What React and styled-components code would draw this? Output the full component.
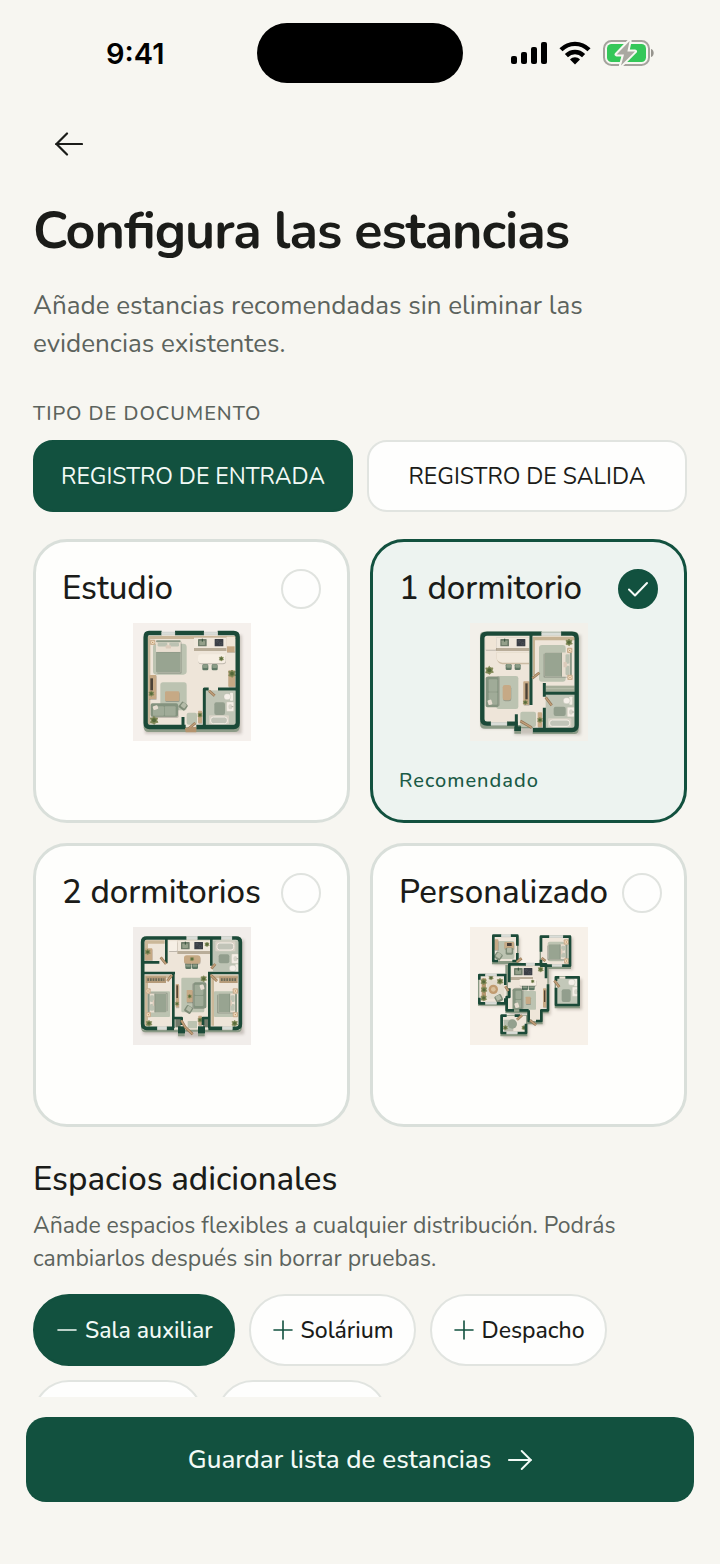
import React, { useState } from "react";
import styled, { createGlobalStyle } from "styled-components";

const WALL = "#1b4a38";
const FLOOR = "#eee5d9";
const SAGE = "#98a491";
const RUG = "#bcc3b1";
const WOOD = "#c6a985";
const LINEN = "#e9dfd1";

/* Furniture, drawn from above */

const Wall = ({ d, w = 10 }) => (
  <path d={d} fill="none" stroke={WALL} strokeWidth={w} strokeLinejoin="round" />
);

const Pane = ({ x, y, w, h = 9 }) => (
  <rect x={x} y={y} width={w} height={h} fill="#d9ddd8" stroke="#b9bdb5" strokeWidth="1" />
);

const Plant = ({ x, y, r = 9 }) => (
  <g transform={`translate(${x} ${y}) scale(${r / 10})`}>
    <path
      d="M0-10 4-6 9-6 7 0 10 5 4 6 1 10-4 7-9 6-7 0-9-6-4-6Z"
      fill="#7d8654"
      strokeLinejoin="round"
      stroke="#7d8654"
      strokeWidth="2"
    />
    <circle r="5" fill="#55693a" />
  </g>
);

const Lamp = ({ x, y }) => (
  <g>
    <rect x={x - 8} y={y - 8} width="16" height="16" rx="3" fill="#cbb091" />
    <circle cx={x} cy={y} r="5" fill="#f0dcc0" />
    <circle cx={x} cy={y} r="2" fill="#b98d5c" />
  </g>
);

// The pillows point up by default, angle turns the bed round its centre
const Bed = ({ x, y, w, h, angle = 0 }) => (
  <g transform={`translate(${x} ${y}) rotate(${angle})`}>
    <rect x={-w / 2 + 3} y={-h / 2 + 4} width={w} height={h} rx="4" fill="#00000030" />
    <rect x={-w / 2} y={-h / 2} width={w} height={h} rx="3" fill={LINEN} />
    <rect x={-w / 2} y={-h / 2} width={w} height="6" rx="3" fill="#8d9a88" />
    <rect x={-w / 2 + 5} y={-h / 2 + 7} width={w / 2 - 8} height="12" rx="4" fill="#bcc2b2" />
    <rect x="3" y={-h / 2 + 7} width={w / 2 - 8} height="12" rx="4" fill="#bcc2b2" />
    <rect x="-8" y={-h / 2 + 15} width="16" height="10" rx="2" fill="#dccbbb" />
    <rect x={-w / 2} y={-h / 2 + h * 0.37} width={w} height={h * 0.63} rx="3" fill={SAGE} />
    <path d={`M${-w / 2} ${-h / 2 + h * 0.37 + 1}h${w}`} stroke="#82907d" strokeWidth="2" />
  </g>
);

const Sofa = ({ x, y, w, h, angle = 0 }) => (
  <g transform={`translate(${x} ${y}) rotate(${angle})`}>
    <rect x={-w / 2 + 2} y={-h / 2 + 4} width={w} height={h} rx="5" fill="#00000030" />
    <rect x={-w / 2} y={-h / 2} width={w} height={h} rx="5" fill="#84937f" />
    <rect x={-w / 2 + 7} y={-h / 2 + 9} width={w / 2 - 8} height={h - 12} rx="3" fill="#a0ab98" />
    <rect x="1" y={-h / 2 + 9} width={w / 2 - 8} height={h - 12} rx="3" fill="#a0ab98" />
    <rect
      x={-w / 2 + 7}
      y={-h / 2 + 7}
      width="15"
      height="12"
      rx="3"
      fill="#e6ddd0"
      transform={`rotate(-18 ${-w / 2 + 14} ${-h / 2 + 13})`}
    />
  </g>
);

const Armchair = ({ x, y, angle = 0 }) => (
  <g transform={`translate(${x} ${y}) rotate(${angle})`}>
    <rect x="-11" y="-10" width="22" height="21" rx="4" fill="#7f8c78" />
    <rect x="-7" y="-9" width="14" height="14" rx="2" fill="#b4bba8" />
  </g>
);

const Kitchen = ({ x, y, w, hob, sink }) => (
  <g>
    <rect x={x} y={y} width={w} height="40" fill="#b9ad99" />
    <rect x={x} y={y} width={w} height="31" fill="#f0e8dc" />
    <rect x={sink} y={y + 4} width="26" height="22" rx="2" fill="#6f7d6b" />
    <rect x={sink + 4} y={y + 9} width="17" height="13" rx="2" fill="#94a08a" />
    <path d={`M${sink + 13} ${y + 3}v9`} stroke="#34513a" strokeWidth="3" />
    <rect x={hob} y={y + 4} width="26" height="22" rx="1" fill="#3b3f46" />
    <circle cx={hob + 8} cy={y + 11} r="3" fill="none" stroke="#646a70" />
    <circle cx={hob + 18} cy={y + 18} r="4" fill="none" stroke="#646a70" />
  </g>
);

const Stool = ({ x, y }) => (
  <g>
    <rect x={x} y={y} width="18" height="18" rx="4" fill="#5f7865" />
    <rect x={x + 2} y={y} width="14" height="11" rx="3" fill="#8a9c86" />
  </g>
);

const Tub = ({ x, y, w, h }) => (
  <g>
    <rect x={x} y={y} width={w} height={h} rx="3" fill="#d8d2c6" />
    <rect x={x + 5} y={y + 5} width={w - 10} height={h - 9} rx="8" fill="#c1c4b8" stroke="#f4eee5" strokeWidth="3" />
  </g>
);

const Toilet = ({ x, y }) => (
  <g>
    <rect x={x + 18} y={y - 2} width="9" height="24" rx="2" fill="#f2ede4" />
    <rect x={x} y={y + 1} width="20" height="18" rx="8" fill="#f5f0e9" stroke="#b7b8ab" />
  </g>
);

const Basin = ({ x, y }) => (
  <g>
    <rect x={x} y={y} width="21" height="28" rx="2" fill="#f4eee6" stroke="#cfc7b9" />
    <ellipse cx={x + 11} cy={y + 14} rx="6" ry="8" fill="#d8d5ca" />
    <path d={`M${x + 15} ${y + 14}h5`} stroke="#8c8c80" strokeWidth="2" />
  </g>
);

const Block = ({ x, y, w, h, rx = 2, fill = WOOD }) => (
  <g>
    <rect x={x + 1} y={y + 3} width={w} height={h} rx={rx} fill="#00000033" />
    <rect x={x} y={y} width={w} height={h} rx={rx} fill={fill} />
  </g>
);

const Rug = ({ x, y, w, h, rx = 6, fill = RUG }) => (
  <rect x={x} y={y} width={w} height={h} rx={rx} fill={fill} />
);

const Leaf = ({ d }) => (
  <g fill="none">
    <path d={d} stroke="#937353" strokeWidth="8" />
    <path d={d} stroke="#c2a27c" strokeWidth="4" />
  </g>
);

const Shade = ({ d }) => <path d={d} fill="#4a3a2c" opacity="0.25" filter="url(#plan-blur)" />;

/* Floor plans */

const StudioPlan = () => (
  <Plan viewBox="36 24 354 354" role="img" aria-label="Plano de estudio">
    <defs>
      <filter id="plan-blur">
        <feGaussianBlur stdDeviation="5" />
      </filter>
    </defs>
    <rect x="36" y="24" width="354" height="354" fill="#f5f0ec" />
    <Shade d="M72 60H362V356H72Z" />
    <rect x="68" y="54" width="288" height="297" rx="14" fill="#8d9b87" />
    <rect x="73" y="54" width="278" height="283" rx="9" fill={FLOOR} />
    <path d="M80 63H344V72H88V328H80Z" fill="#c9b699" />
    <Rug x={96} y={86} w={101} h={93} rx={10} />
    <Rug x={118} y={202} w={79} h={84} rx={8} />
    <Bed x={142} y={124} w={74} h={97} />
    <Lamp x={95} y={82} />
    <Kitchen x={219} y={68} w={98} sink={231} hob={281} />
    <Block x={317} y={65} w={25} h={45} fill="#f0e5d6" />
    <rect x="318" y="94" width="23" height="18" fill={WOOD} />
    <Stool x={244} y={148} />
    <Stool x={272} y={148} />
    <Block x={231} y={118} w={83} h={27} rx={9} fill="#f6eee3" />
    <Plant x={301} y={131} r={7} />
    <Block x={322} y={166} w={20} h={49} />
    <Plant x={333} y={176} r={11} />
    <Block x={84} y={180} w={22} h={72} />
    <rect x="88" y="190" width="8" height="36" fill="#4a4136" />
    <Plant x={91} y={236} r={8} />
    <Block x={132} y={229} w={43} h={29} rx={4} />
    <Sofa x={130} y={285} w={82} h={40} />
    <Armchair x={187} y={273} angle={38} />
    <Plant x={99} y={316} r={12} />
    <rect x="254" y="226" width="88" height="103" fill="#c0c5b6" />
    <Rug x={280} y={262} w={32} h={38} fill="#929e8d" />
    <Toilet x={309} y={235} />
    <Basin x={317} y={261} />
    <Tub x={264} y={301} w={60} h={29} />
    <Rug x={197} y={293} w={31} h={36} />
    <Block x={231} y={287} w={12} h={37} />
    <Plant x={237} y={300} r={7} />
    <Wall d="M122 54H84Q74 54 74 66V324Q74 336 86 336H194M226 336H338Q350 336 350 324V66Q350 54 338 54H290M162 54H249" w={13} />
    <Wall d="M186 306V336M250 336V222H263M291 222H350" w={9} />
    <Pane x={122} y={51} w={40} />
    <Pane x={249} y={51} w={41} />
    <Leaf d="M197 346 223 324" />
    <Leaf d="M264 227 281 242" />
    <path d="M192 339 226 335V352H194Z" fill="#b4936e" />
  </Plan>
);

const OneRoomPlan = () => (
  <Plan viewBox="27 24 354 354" role="img" aria-label="Plano de 1 dormitorio">
    <rect x="27" y="24" width="354" height="354" fill="#f2f0ea" />
    <Shade d="M62 60H359V359H160V340H62Z" />
    <path d="M57 62Q57 50 71 50H340Q353 50 353 64V342Q353 357 340 357H215V340H180V356H160V341H72Q57 341 57 326Z" fill="#8b9a86" />
    <path d="M64 57H346V342H216V330H160V326H64Z" fill={FLOOR} />
    <path d="M216 65H342V76H222V180H216Z" fill="#c6b394" />
    <Rug x={234} y={90} w={80} h={110} rx={9} />
    <Bed x={292} y={149} w={73} h={81} angle={90} />
    <Plant x={324} y={82} r={10} />
    <Lamp x={326} y={106} />
    <Lamp x={327} y={187} />
    <Kitchen x={105} y={68} w={100} sink={118} hob={167} />
    <Block x={73} y={66} w={32} h={38} fill="#f0e5d6" />
    <path d="M107 112H204V148H124Q107 144 107 128Z" fill="#cbbba3" />
    <path d="M107 112H204V143H124Q107 140 107 128Z" fill="#f1e8db" />
    <Stool x={134} y={147} />
    <Stool x={161} y={147} />
    <Plant x={85} y={166} r={12} />
    <Rug x={106} y={183} w={66} h={99} rx={7} />
    <Sofa x={93} y={231} w={91} h={38} angle={270} />
    <Block x={125} y={210} w={25} h={46} rx={7} />
    <Block x={187} y={199} w={18} h={70} />
    <rect x="193" y="205" width="7" height="48" fill="#4b4237" />
    <Plant x={193} y={262} r={7} />
    <rect x="255" y="212" width="86" height="19" fill="#a6ae9a" />
    <path d="M255 221H341" stroke="#c6c8b8" strokeWidth="2" />
    <rect x="254" y="239" width="88" height="99" fill="#bfc4b5" />
    <Rug x={278} y={275} w={36} h={28} fill="#929e8d" />
    <Toilet x={307} y={247} />
    <Basin x={319} y={277} />
    <Tub x={261} y={310} w={70} h={28} />
    <Rug x={178} y={290} w={47} h={46} />
    <Block x={230} y={292} w={13} h={44} />
    <Plant x={237} y={315} r={8} />
    <Wall d="M242 56H78Q64 56 64 70V313Q64 326 78 326H90M300 56H333Q347 56 347 70V331Q347 345 333 345H216M138 326H170" w={13} />
    <Wall d="M210 60V270M250 204V245M250 278V344M250 235H346M166 298V348" w={9} />
    <rect x="160" y="334" width="20" height="14" fill={WALL} />
    <Pane x={242} y={52} w={58} />
    <Pane x={90} y={322} w={48} />
    <Leaf d="M178 318 212 338" />
    <Leaf d="M214 190 235 173" />
    <Leaf d="M254 247 272 271" />
  </Plan>
);

const TwoRoomPlan = () => (
  <Plan viewBox="37 24 354 354" role="img" aria-label="Plano de 2 dormitorios">
    <rect x="37" y="24" width="354" height="354" fill="#f1edea" />
    <Shade d="M66 62H370V346H254V356H172V346H66Z" />
    <path d="M61 66Q61 53 75 53H350Q364 53 364 66V325Q364 340 350 340H252V352H232V338H192V352H172V340H75Q61 340 61 325Z" fill="#8b9a86" />
    <rect x="66" y="58" width="292" height="274" fill={FLOOR} />
    <path d="M72 64H132V74H82V124H72ZM72 169H155V178H82V320H72ZM272 169H352V178H280V320H272Z" fill="#cbb899" />
    <rect x="277" y="64" width="78" height="93" fill="#bec4b5" />
    <Rug x={294} y={106} w={32} h={27} fill="#929e8d" />
    <Tub x={284} y={67} w={60} h={30} />
    <Basin x={333} y={105} />
    <Toilet x={326} y={138} />
    <Block x={73} y={88} w={22} h={36} />
    <Plant x={81} y={99} r={8} />
    <Kitchen x={170} y={65} w={98} sink={181} hob={221} />
    <Block x={144} y={67} w={25} h={29} fill="#f6efe5" />
    <Plant x={259} y={76} r={7} />
    <Stool x={194} y={132} />
    <Stool x={214} y={132} />
    <Block x={190} y={109} w={49} h={25} rx={8} />
    <Plant x={214} y={120} r={6} />
    <Rug x={182} y={176} w={69} h={104} rx={4} />
    <Sofa x={238} y={229} w={78} h={38} angle={90} />
    <Plant x={249} y={179} r={9} />
    <Block x={198} y={213} w={18} h={37} />
    <Plant x={207} y={232} r={6} />
    <Armchair x={204} y={271} angle={32} />
    <Block x={165} y={195} w={10} h={70} />
    <rect x="167" y="199" width="5" height="38" fill="#5b4836" />
    <Plant x={169} y={254} r={6} />
    <Rug x={88} y={217} w={60} h={77} rx={3} />
    <Rug x={280} y={217} w={60} h={77} rx={3} />
    <Bed x={109} y={252} w={57} h={56} angle={270} />
    <Bed x={321} y={252} w={57} h={56} angle={90} />
    <Lamp x={82} y={216} />
    <Lamp x={83} y={287} />
    <Lamp x={344} y={216} />
    <Lamp x={344} y={287} />
    <Plant x={85} y={313} r={9} />
    <Plant x={342} y={313} r={9} />
    <rect x="75" y="172" width="61" height="20" fill="#b59b79" />
    <rect x="296" y="172" width="55" height="20" fill="#b59b79" />
    <path d="M80 182H131M301 182H346" stroke="#6a6b58" strokeWidth="8" strokeDasharray="5 3" />
    <Rug x={201} y={306} w={28} h={22} rx={2} />
    <rect x="164" y="300" width="16" height="25" fill="#737b6b" />
    <rect x="247" y="300" width="16" height="25" fill="#737b6b" />
    <Block x={233} y={290} w={11} h={29} />
    <Plant x={238} y={303} r={7} />
    <Wall d="M198 57H78Q66 57 66 69V315Q66 328 78 328H110M138 328H160M230 57H302M334 57H346Q359 57 359 69V315Q359 328 346 328H335M305 328H263" w={11} />
    <Wall d="M66 162H163M262 162H358M158 162V328M266 162V328M137 58V133M70 130H116M272 58V140M158 297H183V318M266 297H247V318" w={8} />
    <rect x="172" y="322" width="21" height="21" fill={WALL} />
    <rect x="232" y="322" width="21" height="21" fill={WALL} />
    <Pane x={198} y={52} w={32} />
    <Pane x={302} y={52} w={32} />
    <Pane x={110} y={323} w={28} />
    <Pane x={305} y={323} w={30} />
    <Leaf d="M120 115 136 135" />
    <Leaf d="M140 186 154 168" />
    <Leaf d="M270 168 289 186" />
    <Leaf d="M272 149 284 135" />
    <Leaf d="M182 304 194 325 216 346" />
  </Plan>
);

const CustomPlan = () => (
  <Plan viewBox="28 24 354 354" role="img" aria-label="Plano personalizado">
    <rect x="28" y="24" width="354" height="354" fill="#f7f1e9" />
    <Shade d="M98 56H178V138H98ZM242 56H337V152H242ZM58 172H140V262H58ZM288 180H364V272H288ZM126 296H204V356H126ZM146 144H270V288H250V318H210V288H146Z" />
    <path d="M94 50H173V136H94ZM237 50H331V150H237ZM52 166H136V260H52ZM282 172H358V268H282ZM119 288H200V352H119ZM134 138H264V283H246V316H200V283H134Z" fill="#899983" />
    <path d="M98 53H169V126H98ZM241 53H327V140H241ZM56 168H138V252H56ZM286 174H354V258H286ZM123 290H196V342H123ZM142 138H260V274H242V306H204V274H142Z" fill={FLOOR} />

    <Rug x={111} y={66} w={50} h={54} />
    <Block x={101} y={61} w={12} h={32} />
    <Block x={131} y={69} w={29} h={20} />
    <rect x="139" y="72" width="14" height="9" fill="#463e38" />
    <Armchair x={146} y={96} />
    <Armchair x={113} y={111} angle={35} />

    <Rug x={261} y={68} w={50} h={59} />
    <Bed x={292} y={98} w={45} h={57} angle={90} />
    <Lamp x={317} y={69} />
    <Lamp x={318} y={126} />

    <Rug x={78} y={184} w={52} h={55} fill="#e3dccd" />
    <path d="M63 178H76V244H63Z" fill="#b89870" />
    <Plant x={69} y={188} r={9} />
    <Plant x={70} y={212} r={9} />
    <Plant x={69} y={237} r={9} />
    <Plant x={91} y={176} r={7} />
    <Plant x={118} y={187} r={9} />
    <circle cx="98" cy="211" r="14" fill="#c19b70" />
    <circle cx="98" cy="211" r="7" fill="#dac19b" />
    <Armchair x={114} y={238} angle={-28} />

    <rect x="289" y="178" width="62" height="78" fill="#c3c8b9" />
    <Rug x={303} y={211} w={27} h={38} fill="#929e8d" />
    <Toilet x={323} y={180} />
    <Basin x={335} y={204} />

    <Kitchen x={149} y={143} w={68} sink={160} hob={189} />
    <Plant x={240} y={151} r={8} />
    <Stool x={184} y={196} />
    <Stool x={204} y={196} />
    <Block x={176} y={180} w={50} h={20} rx={4} fill="#f6eee3" />
    <Plant x={216} y={187} r={5} />
    <Rug x={173} y={216} w={53} h={56} rx={3} />
    <Sofa x={170} y={241} w={65} h={29} angle={270} />
    <Block x={195} y={233} w={15} h={22} />
    <Block x={247} y={208} w={10} h={57} />
    <rect x="250" y="214" width="4" height="35" fill="#52402f" />

    <Block x={129} y={302} w={28} h={32} fill="#b7beae" />
    <circle cx="155" cy="315" r="14" fill="#93a08e" />
    <Plant x={134} y={326} r={7} />
    <Plant x={190} y={326} r={7} />

    <Wall d="M122 50H98V126H112M150 50H170V80M170 102V126H155" w={8} />
    <Wall d="M266 53H241V98M307 53H328V140H304M274 140H241V122" w={8} />
    <Wall d="M74 168H56V182M108 168H134V198M134 238V253H108M56 236V253H74" w={8} />
    <Wall d="M314 175H354V258H286V206M286 186V175H296" w={8} />
    <Wall d="M138 290H123V342H138M170 342H196V314M178 290H162" w={8} />
    <Wall d="M196 136H146V190M146 208V234H138V274H160M222 136H256V178M262 196V274H242V306H226M204 274V306H212M176 274H204" w={8} />
    <Pane x={122} y={47} w={28} h={7} />
    <Pane x={266} y={49} w={41} h={7} />
    <Pane x={274} y={136} w={30} h={7} />
    <Pane x={196} y={132} w={26} h={7} />
    <Pane x={138} y={338} w={32} h={7} />
    <Pane x={74} y={164} w={34} h={7} />
    <Pane x={74} y={249} w={34} h={7} />
    <Leaf d="M168 129 183 118" />
    <Leaf d="M243 117 254 126" />
    <Leaf d="M281 185 296 204" />
    <Leaf d="M134 202 143 216" />
    <Leaf d="M169 302 184 289" />
    <Leaf d="M208 304 226 318" />
  </Plan>
);

/* Icons */

const Arrow = ({ size, back }) => (
  <svg width={size} height={size} viewBox="0 0 28 28" fill="none" stroke="currentColor" strokeWidth="2.2" strokeLinecap="round" strokeLinejoin="round" aria-hidden="true">
    <path d={back ? "M27 14H1M12 3.5 1.5 14 12 24.5" : "M1 14H27M16 3.5 26.5 14 16 24.5"} />
  </svg>
);

const Sign = ({ minus }) => (
  <svg width="20" height="20" viewBox="0 0 20 20" stroke="currentColor" strokeWidth="1.6" strokeLinecap="round" aria-hidden="true">
    <path d={minus ? "M1 10H19" : "M1 10H19M10 1V19"} />
  </svg>
);

const Signal = () => (
  <svg width="36" height="24" viewBox="0 0 36 24" aria-hidden="true">
    <rect x="0" y="15" width="6" height="8" rx="2" />
    <rect x="10" y="11" width="6" height="12" rx="2" />
    <rect x="20" y="6" width="6" height="17" rx="2" />
    <rect x="30" y="1" width="6" height="22" rx="2" />
  </svg>
);

const Wifi = () => (
  <svg width="32" height="24" viewBox="0 0 32 24" fill="none" stroke="#000" strokeWidth="4.4" aria-hidden="true">
    <path d="M2 8.8C10 .9 22 .9 30 8.8" />
    <path d="M7.4 14.6C12.2 9.8 19.8 9.8 24.6 14.6" />
    <path d="M16 23.6 11 18.4C13.8 15.6 18.2 15.6 21 18.4Z" fill="#000" stroke="none" />
  </svg>
);

const Battery = () => (
  <svg width="51" height="28" viewBox="0 0 51 28" aria-hidden="true">
    <rect x="1" y="2" width="45" height="24" rx="7.5" fill="none" stroke="#a5a39d" strokeWidth="2" />
    <rect x="4" y="5" width="39" height="18" rx="4.5" fill="#35c759" />
    <path d="M48 10C51.6 10.6 51.6 17.4 48 18Z" fill="#96948e" />
    <path d="M26.6 2 13.6 15.4H21L18 26.4 32 12.4H24.4Z" fill="#a9a8a1" stroke="#f8f7f2" strokeWidth="4" paintOrder="stroke" strokeLinejoin="round" />
  </svg>
);

const layouts = [
  { id: "studio", name: "Estudio", plan: <StudioPlan /> },
  { id: "one", name: "1 dormitorio", plan: <OneRoomPlan />, recommended: true },
  { id: "two", name: "2 dormitorios", plan: <TwoRoomPlan /> },
  { id: "custom", name: "Personalizado", plan: <CustomPlan /> },
];

const spaces = ["Sala auxiliar", "Solárium", "Despacho", "Lavadero", "Gimnasio"];

function App() {
  const [documentType, setDocumentType] = useState("entrada");
  const [layout, setLayout] = useState("one");
  const [added, setAdded] = useState(["Sala auxiliar"]);

  const toggleSpace = (space) => {
    setAdded(
      added.includes(space)
        ? added.filter((s) => s !== space)
        : [...added, space]
    );
  };

  return (
    <>
      <GlobalStyle />
      <Screen>
        <Content>
          <StatusBar>
            <Time>9:41</Time>
            <Island />
            <StatusIcons>
              <Signal />
              <Wifi />
              <Battery />
            </StatusIcons>
          </StatusBar>
          <BackButton aria-label="Volver">
            <Arrow size={28} back />
          </BackButton>
          <Title>Configura las estancias</Title>
          <Intro>
            Añade estancias recomendadas sin eliminar las evidencias existentes.
          </Intro>
          <Label>TIPO DE DOCUMENTO</Label>
          <TypeRow>
            <TypeButton
              $active={documentType === "entrada"}
              aria-pressed={documentType === "entrada"}
              onClick={() => setDocumentType("entrada")}
            >
              REGISTRO DE ENTRADA
            </TypeButton>
            <TypeButton
              $active={documentType === "salida"}
              aria-pressed={documentType === "salida"}
              onClick={() => setDocumentType("salida")}
            >
              REGISTRO DE SALIDA
            </TypeButton>
          </TypeRow>
          <Cards>
            {layouts.map(({ id, name, plan, recommended }) => (
              <Card key={id} htmlFor={id} $active={layout === id}>
                <CardHead>
                  <CardName>{name}</CardName>
                  <RadioMark>
                    <Radio
                      id={id}
                      name="layout"
                      checked={layout === id}
                      onChange={() => setLayout(id)}
                    />
                    {layout === id && (
                      <Check viewBox="0 0 20 16" aria-hidden="true">
                        <path d="M1 8.5 7 14.5 19 2" />
                      </Check>
                    )}
                  </RadioMark>
                </CardHead>
                {plan}
                {recommended && <Badge>Recomendado</Badge>}
              </Card>
            ))}
          </Cards>
          <Subtitle>Espacios adicionales</Subtitle>
          <Help>
            Añade espacios flexibles a cualquier distribución. Podrás cambiarlos
            después sin borrar pruebas.
          </Help>
          <Chips>
            {spaces.map((space) => (
              <Chip
                key={space}
                $active={added.includes(space)}
                aria-pressed={added.includes(space)}
                onClick={() => toggleSpace(space)}
              >
                <Sign minus={added.includes(space)} />
                <span>{space}</span>
              </Chip>
            ))}
          </Chips>
        </Content>
        <Footer>
          <SaveButton>
            Guardar lista de estancias
            <Arrow size={24} />
          </SaveButton>
        </Footer>
      </Screen>
    </>
  );
}

const GlobalStyle = createGlobalStyle`
  * {
    box-sizing: border-box;
    margin: 0;
  }
  body {
    background: #f7f6f1;
    color: #1b1c19;
    font-family: Nunito, Lato, sans-serif;
  }
  button {
    font-family: inherit;
    cursor: pointer;
  }
`;

const Screen = styled.div`
  height: 100vh;
  display: flex;
  flex-direction: column;
`;

const Content = styled.main`
  flex: 1;
  min-height: 0;
  overflow-y: auto;
  scrollbar-width: none;
  padding: 0 33px;
`;

const StatusBar = styled.div`
  display: grid;
  grid-template-columns: 1fr auto 1fr;
  align-items: center;
  height: 106px;
`;

const Time = styled.span`
  padding-left: 73px;
  color: #000;
  font-family: Inter, sans-serif;
  font-size: 29px;
  font-weight: 600;
`;

const Island = styled.div`
  width: 206px;
  height: 60px;
  border-radius: 30px;
  background: #000;
`;

const StatusIcons = styled.div`
  display: flex;
  align-items: center;
  justify-content: flex-end;
  gap: 12px;
  padding-right: 33px;
`;

const BackButton = styled.button`
  display: grid;
  place-items: center;
  width: 72px;
  height: 76px;
  border: none;
  background: none;
  color: #1b1c19;
`;

const Title = styled.h1`
  margin-top: 17px;
  font-size: 52px;
  font-weight: 700;
  line-height: 64px;
  letter-spacing: -1px;
  font-feature-settings: "liga" 1;
`;

const Intro = styled.p`
  margin-top: 24px;
  color: #5c635d;
  font-size: 26px;
  line-height: 38px;
`;

const Label = styled.p`
  margin-top: 39px;
  color: #5c635d;
  font-size: 20px;
  font-weight: 500;
  line-height: 24px;
  letter-spacing: 1px;
`;

const TypeRow = styled.div`
  display: grid;
  grid-template-columns: 1fr 1fr;
  gap: 14px;
  margin-top: 14px;
`;

const TypeButton = styled.button`
  height: 72px;
  border: 2px solid ${(p) => (p.$active ? "#12513f" : "#e1e4e0")};
  border-radius: 20px;
  background: ${(p) => (p.$active ? "#12513f" : "#fefefd")};
  color: ${(p) => (p.$active ? "#f2faf6" : "#1b1c19")};
  font-size: 23px;
`;

const Cards = styled.div`
  display: grid;
  grid-template-columns: 1fr 1fr;
  gap: 20px;
  margin-top: 27px;
`;

const Card = styled.label`
  display: flex;
  flex-direction: column;
  gap: 14px;
  min-width: 0;
  min-height: 284px;
  padding: 27px 26px;
  border: 3px solid ${(p) => (p.$active ? "#12513f" : "#d9dfda")};
  border-radius: 34px;
  background: ${(p) => (p.$active ? "#edf3f0" : "#fefefc")};
  cursor: pointer;
`;

const CardHead = styled.div`
  display: flex;
  align-items: center;
  justify-content: space-between;
  gap: 14px;
`;

const CardName = styled.span`
  font-size: 33px;
  font-weight: 500;
  line-height: 40px;
  white-space: nowrap;
`;

const RadioMark = styled.span`
  display: grid;
  flex-shrink: 0;
  place-items: center;

  > * {
    grid-area: 1 / 1;
  }
`;

const Radio = styled.input.attrs({ type: "radio" })`
  appearance: none;
  width: 40px;
  height: 40px;
  border: 2px solid #e0e3df;
  border-radius: 50%;
  background: #fefefd;

  &:checked {
    border-color: #12513f;
    background: #12513f;
  }
`;

const Check = styled.svg`
  width: 20px;
  height: 16px;
  fill: none;
  stroke: #f5fbf8;
  stroke-width: 2;
  stroke-linecap: round;
  stroke-linejoin: round;
  pointer-events: none;
`;

const Plan = styled.svg`
  display: block;
  align-self: center;
  width: 118px;
  height: 118px;
`;

const Badge = styled.span`
  margin-top: auto;
  color: #1a5a46;
  font-size: 20px;
  font-weight: 500;
  line-height: 24px;
  letter-spacing: 1px;
`;

const Subtitle = styled.h2`
  margin-top: 33px;
  font-size: 33px;
  font-weight: 500;
  line-height: 40px;
`;

const Help = styled.p`
  margin-top: 9px;
  color: #5c635d;
  font-size: 23px;
  line-height: 33px;
`;

const Chips = styled.div`
  display: flex;
  flex-wrap: wrap;
  gap: 14px;
  margin-top: 19px;
`;

const Chip = styled.button`
  display: flex;
  align-items: center;
  gap: 8px;
  height: 72px;
  padding: 0 20px 0 22px;
  border: 2px solid ${(p) => (p.$active ? "#12513f" : "#e1e4e0")};
  border-radius: 36px;
  background: ${(p) => (p.$active ? "#12513f" : "#fefefd")};
  color: ${(p) => (p.$active ? "#f2faf6" : "#1b1c19")};
  font-size: 23px;
  font-weight: 500;

  svg {
    color: ${(p) => (p.$active ? "#f2faf6" : "#12513f")};
  }
`;

const Footer = styled.footer`
  padding: 20px 26px 62px;
`;

const SaveButton = styled.button`
  display: flex;
  align-items: center;
  justify-content: center;
  gap: 17px;
  width: 100%;
  height: 85px;
  border: none;
  border-radius: 20px;
  background: #12513f;
  color: #f2faf6;
  font-size: 26px;
  font-weight: 500;
`;

export default App;
